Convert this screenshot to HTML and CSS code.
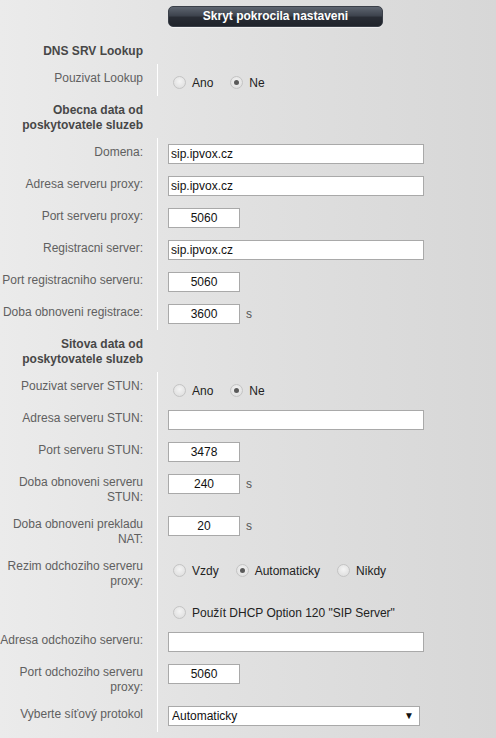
FILE: index.html
```html
<!DOCTYPE html>
<html lang="cs">
<head>
<meta charset="utf-8">
<title>Pokrocila nastaveni</title>
<link rel="stylesheet" href="styles.css">
</head>
<body>
<div class="page">
  <div class="toolbar">
    <button class="toggle" type="button">Skryt pokrocila nastaveni</button>
  </div>
  <div class="form">
    <div class="lbl head">DNS SRV Lookup</div><div class="val none"></div>

    <div class="lbl">Pouzivat Lookup</div>
    <div class="val"><div class="radios">
      <label class="opt"><input type="radio" name="lookup"><span>Ano</span></label>
      <label class="opt"><input type="radio" name="lookup" checked><span>Ne</span></label>
    </div></div>

    <div class="lbl head">Obecna data od<br>poskytovatele sluzeb</div><div class="val none"></div>

    <div class="lbl">Domena:</div>
    <div class="val"><input class="txt long" type="text" value="sip.ipvox.cz"></div>

    <div class="lbl">Adresa serveru proxy:</div>
    <div class="val"><input class="txt long" type="text" value="sip.ipvox.cz"></div>

    <div class="lbl">Port serveru proxy:</div>
    <div class="val"><input class="txt short" type="text" value="5060"></div>

    <div class="lbl">Registracni server:</div>
    <div class="val"><input class="txt long" type="text" value="sip.ipvox.cz"></div>

    <div class="lbl">Port registracniho serveru:</div>
    <div class="val"><input class="txt short" type="text" value="5060"></div>

    <div class="lbl">Doba obnoveni registrace:</div>
    <div class="val"><div class="unitrow"><input class="txt short" type="text" value="3600"><span class="unit">s</span></div></div>

    <div class="lbl head">Sitova data od<br>poskytovatele sluzeb</div><div class="val none"></div>

    <div class="lbl">Pouzivat server STUN:</div>
    <div class="val"><div class="radios">
      <label class="opt"><input type="radio" name="stun"><span>Ano</span></label>
      <label class="opt"><input type="radio" name="stun" checked><span>Ne</span></label>
    </div></div>

    <div class="lbl">Adresa serveru STUN:</div>
    <div class="val"><input class="txt long" type="text" value=""></div>

    <div class="lbl">Port serveru STUN:</div>
    <div class="val"><input class="txt short" type="text" value="3478"></div>

    <div class="lbl">Doba obnoveni serveru<br>STUN:</div>
    <div class="val"><div class="unitrow"><input class="txt short" type="text" value="240"><span class="unit">s</span></div></div>

    <div class="lbl">Doba obnoveni prekladu<br>NAT:</div>
    <div class="val"><div class="unitrow"><input class="txt short" type="text" value="20"><span class="unit">s</span></div></div>

    <div class="lbl">Rezim odchoziho serveru<br>proxy:</div>
    <div class="val"><div class="radios">
      <label class="opt"><input type="radio" name="mode"><span>Vzdy</span></label>
      <label class="opt"><input type="radio" name="mode" checked><span>Automaticky</span></label>
      <label class="opt"><input type="radio" name="mode"><span>Nikdy</span></label>
    </div></div>

    <div class="lbl"></div>
    <div class="val"><div class="radios">
      <label class="opt"><input type="radio" name="mode"><span>Použít DHCP Option 120 "SIP Server"</span></label>
    </div></div>

    <div class="lbl">Adresa odchoziho serveru:</div>
    <div class="val"><input class="txt long" type="text" value=""></div>

    <div class="lbl">Port odchoziho serveru<br>proxy:</div>
    <div class="val"><input class="txt short" type="text" value="5060"></div>

    <div class="lbl">Vyberte síťový protokol</div>
    <div class="val"><div class="selwrap">
      <select class="sel"><option>Automaticky</option><option>UDP</option><option>TCP</option></select>
      <span class="arrow">▼</span>
    </div></div>
  </div>
</div>
</body>
</html>
```
FILE: styles.css
```css
html, body {
  margin: 0;
  padding: 0;
}
body {
  width: 496px;
  height: 738px;
  overflow: hidden;
  background: linear-gradient(to right, #ebebeb 0%, #e0e0e0 50%, #d7d7d7 100%);
  font-family: "Liberation Sans", Arial, sans-serif;
  font-size: 12px;
  color: #5a5a5a;
}
.page {
  width: 496px;
}
.toolbar {
  height: 37px;
  padding: 6px 0 0 168px;
  box-sizing: border-box;
}
.toggle {
  display: block;
  width: 215px;
  height: 21px;
  margin: 0;
  padding: 0;
  border: 1px solid #3a3f48;
  border-radius: 5px;
  background: linear-gradient(to bottom, #5e6570 0%, #3e444e 45%, #282c34 55%, #20242b 100%);
  color: #ffffff;
  font-family: "Liberation Sans", Arial, sans-serif;
  font-size: 12px;
  font-weight: bold;
  line-height: 19px;
  text-align: center;
  box-shadow: 0 1px 0 rgba(255,255,255,0.5);
}
.form {
  display: grid;
  grid-template-columns: 157px 1fr;
}
.lbl {
  padding: 7px 14px 5px 0;
  line-height: 15px;
  text-align: right;
  white-space: nowrap;
  color: #606060;
}
.lbl.head {
  font-weight: bold;
  color: #474747;
}
.val {
  padding: 6px 0 6px 10px;
  border-left: 1px solid #ffffff;
  line-height: 15px;
  color: #222222;
}
.val.none {
  border-left-color: transparent;
}
.txt {
  display: block;
  box-sizing: border-box;
  height: 20px;
  margin: 0;
  padding: 0 2px;
  border: 1px solid #a9a9a9;
  background: #ffffff;
  font-family: "Liberation Sans", Arial, sans-serif;
  font-size: 12px;
  color: #111111;
  outline: none;
}
.txt.long {
  width: 256px;
}
.txt.short {
  width: 72px;
  text-align: center;
}
.unitrow {
  display: flex;
  align-items: center;
  height: 20px;
}
.unit {
  margin-left: 6px;
  color: #555555;
}
.radios {
  display: flex;
  align-items: center;
  height: 20px;
  padding-top: 7px;
  box-sizing: border-box;
}
.opt {
  display: flex;
  align-items: center;
  margin-right: 12px;
  color: #222222;
}
.opt input {
  appearance: none;
  -webkit-appearance: none;
  width: 13px;
  height: 13px;
  margin: -2px 6px 0 5px;
  border: 1px solid #c4c4c4;
  border-radius: 50%;
  background: radial-gradient(circle at 50% 40%, #f4f4f4 0%, #e2e2e2 70%, #d4d4d4 100%);
  box-sizing: border-box;
  position: relative;
}
.opt input:checked::after {
  content: "";
  position: absolute;
  left: 3px;
  top: 3px;
  width: 5px;
  height: 5px;
  border-radius: 50%;
  background: #5a5a5a;
}
.selwrap {
  position: relative;
  width: 252px;
  height: 20px;
}
.sel {
  appearance: none;
  -webkit-appearance: none;
  display: block;
  width: 252px;
  height: 20px;
  margin: 0;
  padding: 0 0 0 3px;
  border: 1px solid #a9a9a9;
  background: #ffffff;
  font-family: "Liberation Sans", Arial, sans-serif;
  font-size: 12px;
  color: #111111;
  outline: none;
}
.arrow {
  position: absolute;
  right: 6px;
  top: 4px;
  font-size: 10px;
  line-height: 12px;
  color: #111111;
  pointer-events: none;
}
```
